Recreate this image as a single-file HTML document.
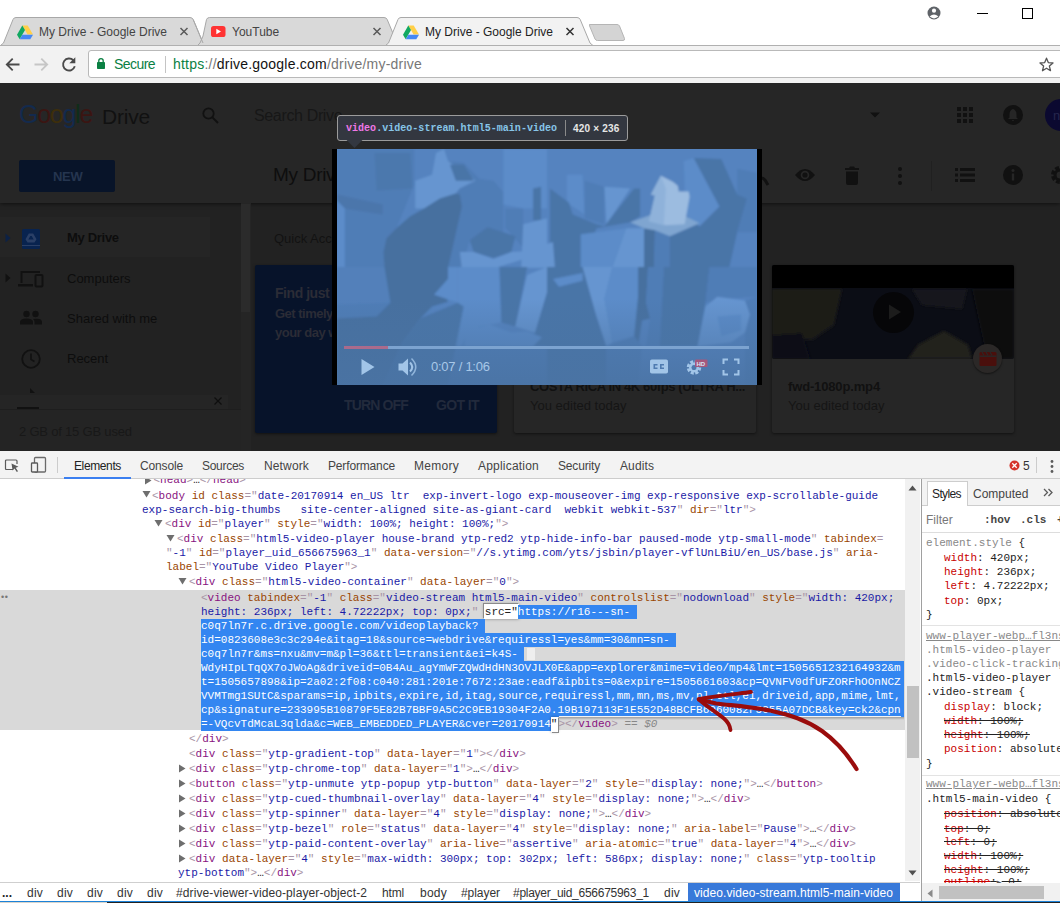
<!DOCTYPE html>
<html><head><meta charset="utf-8"><title>My Drive - Google Drive</title>
<style>
*{box-sizing:border-box;margin:0;padding:0}
html,body{width:1060px;height:903px;overflow:hidden;background:#fff}
body{position:relative;font-family:"Liberation Sans",sans-serif;font-size:12px;color:#222}
.abs,.abs>*{position:absolute}
#titlebar{left:0;top:0;width:1060px;height:46px;background:#fff}
#toolbar{left:0;top:45px;width:1060px;height:38px;background:#f2f2f2;border-top:1px solid #b0b0b0}
#page{left:0;top:83px;width:1060px;height:368px;background:#222;overflow:hidden}
#devtools{left:0;top:451px;width:1060px;height:452px;background:#fff;overflow:hidden}
.t{white-space:nowrap;line-height:1}

.c{font-family:"Liberation Mono",monospace;font-size:11px;line-height:14px;white-space:pre;color:#222}
.c i,.t i{font-style:normal}
.c .t{color:#881280}.c .n{color:#994500}.c .v{color:#1a1aa6}.c .p{color:#a894a6}.c .x{color:#222}
.c .eq{color:#888;font-style:italic}
.c.w{color:#fff}
.selbg{background:#3386f1}
.c .g{color:#888}.c .pn{color:#c80000}
.dtab,.bc{font-size:12px}
/*CSS-END*/
</style></head><body>
<div id="titlebar" class="abs">

<svg style="left:0;top:0" width="1060" height="46" viewBox="0 0 1060 46">
 <!-- inactive tab 1 -->
 <path d="M0.5 45.5 L3.5 43 L13 19.5 Q13.8 17.5 16 17.5 L190 17.5 Q192.3 17.5 193.2 19.5 L203 43 L206 45.5 Z" fill="#d9d9d9" stroke="#a8a8a8" stroke-width="1"/>
 <!-- inactive tab 2 -->
 <path d="M197.5 45.5 L200 43 L203 36 L206.5 19.5 Q207.3 17.5 209.5 17.5 L384 17.5 Q386.3 17.5 387.2 19.5 L397 43 L400 45.5 Z" fill="#d9d9d9" stroke="#a8a8a8" stroke-width="1"/>
 <path d="M193.2 19.5 L203 43" stroke="#a8a8a8" fill="none"/>
 <!-- new tab button -->
 <path d="M589.5 24.5 L617 24.5 Q618.8 24.5 619.5 26 L624.5 38.5 Q625 40.5 623 40.5 L597.5 40.5 Q595.8 40.5 595 39 L589.6 26 Q589 24.5 590.5 24.5Z" fill="#d4d4d4" stroke="#b5b5b5" stroke-width="1"/>
 <!-- bottom line -->
 <path d="M0 45.5 H1060" stroke="#a8a8a8"/>
 <!-- active tab 3 -->
 <path d="M385.5 46 L388.5 43 L398 19.5 Q398.8 17.5 401 17.5 L577 17.5 Q579.3 17.5 580.2 19.5 L590 43 L593 46 Z" fill="#f2f2f2" stroke="none"/>
 <path d="M385.5 45.5 L388.5 43 L398 19.5 Q398.8 17.5 401 17.5 L577 17.5 Q579.3 17.5 580.2 19.5 L590 43 L593 45.5" fill="none" stroke="#a8a8a8"/>
 <!-- favicons: drive -->
 <g id="gd">
  <path d="M22.3 25.5 L27.7 25.5 L33 34.5 L27.6 34.5Z" fill="#ffcf48"/>
  <path d="M22.3 25.5 L17 34.7 L19.7 39.3 L25 30.1Z" fill="#11a861"/>
  <path d="M22.4 34.7 L33 34.7 L30.3 39.3 L19.7 39.3Z" fill="#4688f4"/>
 </g>
 <use href="#gd" x="386" y="0"/>
 <!-- youtube -->
 <rect x="211" y="26" width="14.5" height="11" rx="2.6" fill="#f33"/>
 <path d="M216.3 28.8 L221 31.5 L216.3 34.2Z" fill="#fff"/>
 <!-- close x -->
 <g stroke="#5a5a5a" stroke-width="1.5" fill="none">
  <path d="M180.5 28 l7 7 m0 -7 l-7 7"/>
  <path d="M373.5 28 l7 7 m0 -7 l-7 7"/>
  <path d="M566.5 28 l7 7 m0 -7 l-7 7" stroke="#333"/>
 </g>
 <!-- user icon -->
 <circle cx="934" cy="13" r="6.5" fill="#5f6368"/>
 <circle cx="934" cy="10.7" r="2.1" fill="#fff"/>
 <path d="M929.6 16.6 Q934 12.6 938.4 16.6 Q934 20.2 929.6 16.6Z" fill="#fff"/>
 <!-- min / max -->
 <path d="M977 13.5 H988" stroke="#000" stroke-width="1"/>
 <rect x="1022.5" y="8.5" width="10" height="10" fill="none" stroke="#000" stroke-width="1"/>
</svg>
<div class="t" style="left:39px;top:26px;font-size:12px;color:#444">My Drive - Google Drive</div>
<div class="t" style="left:232px;top:26px;font-size:12px;color:#444">YouTube</div>
<div class="t" style="left:425px;top:26px;font-size:12px;color:#222">My Drive - Google Drive</div>

</div>
<div id="toolbar" class="abs">

<svg style="left:0;top:0" width="1060" height="37" viewBox="0 0 1060 37">
 <rect x="88.5" y="4.5" width="976" height="27" rx="2.5" fill="#fff" stroke="#b9b9b9"/>
 <!-- back -->
 <path d="M19.5 18.5 H7 M12.7 12.6 L6.8 18.5 L12.7 24.4" fill="none" stroke="#4a4a4a" stroke-width="1.8"/>
 <!-- forward -->
 <path d="M34.5 18.5 H47 M41.3 12.6 L47.2 18.5 L41.3 24.4" fill="none" stroke="#c6c6c6" stroke-width="1.8"/>
 <!-- reload -->
 <path d="M73.3 14.2 A6 6 0 1 0 74.8 20.3" fill="none" stroke="#4a4a4a" stroke-width="1.9"/>
 <path d="M75.3 11.3 V17.3 H69.3 Z" fill="#4a4a4a"/>
 <!-- lock -->
 <rect x="97" y="16" width="8" height="7" rx="0.8" fill="#0b8043"/>
 <path d="M98.8 16.5 V14.8 A2.2 2.2 0 0 1 103.2 14.8 V16.5" fill="none" stroke="#0b8043" stroke-width="1.3"/>
 <path d="M165.5 10 V27" stroke="#c4c4c4"/>
 <!-- star -->
 <path d="M1046.5 12.2 L1048.3 16.6 L1053 17 L1049.4 20.1 L1050.5 24.7 L1046.500 22.2 L1042.5 24.7 L1043.6 20.1 L1040 17 L1044.7 16.6Z" fill="none" stroke="#555" stroke-width="1.3" stroke-linejoin="round"/>
</svg>
<div class="t" style="letter-spacing:-0.560px;left:114px;top:11px;font-size:14px;color:#0b8043">Secure</div>
<div class="t" id="url" style="letter-spacing:0.219px;left:173px;top:11px;font-size:14px;color:#777"><span style="color:#0b8043">https</span>://<span style="color:#111">drive.google.com</span>/drive/my-drive</div>

</div>
<div id="page" class="abs">

<!-- header -->
<div style="left:0;top:0;width:1060px;height:120px;background:#262626;box-shadow:0 1px 4px rgba(0,0,0,.55)"></div>
<div class="t" style="letter-spacing:-1.273px;left:19px;top:19px;font-size:25px;font-weight:400"><span style="color:#132a4d">G</span><span style="color:#3b1512">o</span><span style="color:#3d2e0b">o</span><span style="color:#132a4d">g</span><span style="color:#0f2d18">l</span><span style="color:#3b1512">e</span></div>
<div class="t" style="letter-spacing:-0.203px;left:102px;top:23px;font-size:21px;color:#111">Drive</div>
<svg style="left:200px;top:22px" width="22" height="22" viewBox="0 0 22 22"><circle cx="8.5" cy="8.5" r="5.2" fill="none" stroke="#111" stroke-width="1.8"/><path d="M12.4 12.4 L18 18" stroke="#111" stroke-width="2"/></svg>
<div class="t" style="left:254px;top:25px;font-size:16px;color:#171717;letter-spacing:-0.35px">Search Drive</div>
<svg style="left:868px;top:28px" width="14" height="8"><path d="M2 1.5 H12 L7 6.5Z" fill="#111"/></svg>
<!-- apps grid -->
<svg style="left:956px;top:23px" width="18" height="18" viewBox="0 0 18 18" fill="#111"><rect x="1" y="1" width="4" height="4"/><rect x="7" y="1" width="4" height="4"/><rect x="13" y="1" width="4" height="4"/><rect x="1" y="7" width="4" height="4"/><rect x="7" y="7" width="4" height="4"/><rect x="13" y="7" width="4" height="4"/><rect x="1" y="13" width="4" height="4"/><rect x="7" y="13" width="4" height="4"/><rect x="13" y="13" width="4" height="4"/></svg>
<svg style="left:1002px;top:21px" width="22" height="22" viewBox="0 0 22 22"><circle cx="11" cy="11" r="10" fill="#111"/><path d="M11 5 Q7.5 6 7.5 10.5 V13.5 L6 15 H16 L14.500 13.5 V10.5 Q14.5 6 11 5Z M9.800 16 H12.2 Q11 17.8 9.800 16Z" fill="#262626"/></svg>
<div style="left:1045px;top:16px;width:32px;height:32px;border-radius:16px;background:#0b0930"></div>
<div class="t" style="left:1053px;top:26px;font-size:13px;color:#26264d">n</div>
<!-- NEW -->
<div style="left:19px;top:77px;width:96px;height:32px;background:#081429;border-radius:2px"></div>
<div class="t" style="left:53px;top:86.500px;font-size:13px;font-weight:bold;color:#25354f;letter-spacing:-0.3px">NEW</div>
<div class="t" style="left:273px;top:82px;font-size:19px;color:#0e0e0e;letter-spacing:-0.3px">My Drive</div>
<!-- toolbar icons -->
<svg style="left:757px;top:80px" width="14" height="24"><path d="M0 17 Q4 13 8 17 L11 22" fill="none" stroke="#111" stroke-width="3"/></svg>
<svg style="left:794px;top:84px" width="22" height="16" viewBox="0 0 22 16"><path d="M1 8 Q11 -4 21 8 Q11 20 1 8Z" fill="#111"/><circle cx="11" cy="8" r="4.3" fill="#262626"/><circle cx="11" cy="8" r="2.6" fill="#111"/></svg>
<svg style="left:843px;top:82px" width="18" height="22" viewBox="0 0 18 22"><path d="M2 3 H6 L7 1.5 H11 L12 3 H16 V5 H2Z M3 6.500 H15 V18 Q15 20 13 20 H5 Q3 20 3 18Z" fill="#111"/></svg>
<svg style="left:896px;top:83px" width="8" height="20"><circle cx="4" cy="3" r="2" fill="#111"/><circle cx="4" cy="10" r="2" fill="#111"/><circle cx="4" cy="17" r="2" fill="#111"/></svg>
<div style="left:931px;top:78px;width:1px;height:30px;background:#202020"></div>
<svg style="left:955px;top:84px" width="20" height="16" viewBox="0 0 20 16" fill="#111"><rect x="0" y="1" width="3" height="3"/><rect x="5" y="1" width="15" height="3"/><rect x="0" y="6.500" width="3" height="3"/><rect x="5" y="6.500" width="15" height="3"/><rect x="0" y="12" width="3" height="3"/><rect x="5" y="12" width="15" height="3"/></svg>
<svg style="left:1002px;top:81px" width="22" height="22" viewBox="0 0 22 22"><circle cx="11" cy="11" r="10" fill="#111"/><rect x="9.800" y="9.500" width="2.400" height="7" fill="#262626"/><circle cx="11" cy="6.500" r="1.500" fill="#262626"/></svg>
<svg style="left:1049px;top:82px" width="20" height="20" viewBox="0 0 20 20"><circle cx="11" cy="10" r="6.500" fill="none" stroke="#111" stroke-width="5" stroke-dasharray="3.400 1.700"/><circle cx="11" cy="10" r="5" fill="none" stroke="#111" stroke-width="3"/></svg>
<!-- sidebar -->
<div style="left:0;top:134px;width:210px;height:40px;background:#252525"></div>
<div style="left:241px;top:120px;width:10px;height:248px;background:#252525"></div>
<div style="left:241px;top:121px;width:9px;height:108px;background:#2b2b2b"></div>
<svg style="left:4px;top:149px" width="8" height="12"><path d="M1.500 1.500 L6.500 6 L1.500 10.500Z" fill="#0c2145"/></svg>
<svg style="left:21px;top:145px" width="20" height="22" viewBox="0 0 20 22"><rect x="1" y="1" width="18" height="20" rx="1.500" fill="#08234f"/><path d="M7.800 5.500 H12.2 L15.500 11.200 L13.500 14.500 H6.500 L4.500 11.200Z M9.300 8 L7.300 11.500 H12.7 L10.700 8Z" fill="#2a3f66" fill-rule="evenodd"/><rect x="1" y="17" width="18" height="1" fill="#2a3f66"/></svg>
<div class="t" style="left:67px;top:231px;margin-top:-83px;font-size:13px;font-weight:bold;color:#0d0d0d;letter-spacing:-0.3px">My Drive</div>
<svg style="left:4px;top:189px" width="8" height="12"><path d="M1.500 1.500 L6.500 6 L1.500 10.500Z" fill="#111"/></svg>
<svg style="left:18px;top:187px" width="27" height="18" viewBox="0 0 27 18"><path d="M3.500 13 V2 H22" fill="none" stroke="#111" stroke-width="2"/><rect x="0" y="14" width="15" height="2.500" fill="#111"/><rect x="17.500" y="5" width="7" height="11.500" rx="1" fill="none" stroke="#111" stroke-width="2"/></svg>
<div class="t" style="left:67px;top:188.500px;font-size:13px;color:#0d0d0d">Computers</div>
<svg style="left:19px;top:227px" width="24" height="16" viewBox="0 0 24 16" fill="#111"><circle cx="7.500" cy="4" r="3.200"/><circle cx="16.500" cy="4" r="3.200"/><path d="M1 14.500 V12 Q1 8.500 7.500 8.500 Q14 8.500 14 12 V14.500Z"/><path d="M15.500 14.500 V12 Q15.500 10 14 9 Q23 7.500 23 12 V14.500Z"/></svg>
<div class="t" style="left:67px;top:228.500px;font-size:13px;color:#0d0d0d">Shared with me</div>
<svg style="left:20px;top:265px" width="22" height="22" viewBox="0 0 22 22"><circle cx="11" cy="11" r="8.800" fill="none" stroke="#111" stroke-width="1.800"/><path d="M11 5.500 V11.500 L14.500 13.500" fill="none" stroke="#111" stroke-width="1.600"/></svg>
<div class="t" style="left:67px;top:268.500px;font-size:13px;color:#0d0d0d">Recent</div>
<svg style="left:29px;top:304px" width="8" height="8"><path d="M1 1 L6 6 H1Z" fill="#111"/></svg>
<!-- bottom promo bar -->
<div style="left:0;top:312px;width:228px;height:14px;background:#252525"></div>
<div style="left:17px;top:324px;width:22px;height:2px;background:#111"></div>
<svg style="left:213px;top:313px" width="10" height="10"><path d="M1.500 1.500 L8.500 8.500 M8.500 1.500 L1.500 8.500" stroke="#0e0e0e" stroke-width="1.200"/></svg>
<div style="left:0;top:326px;width:241px;height:42px;background:#242424;border-top:1px solid #1e1e1e"></div>
<div class="t" style="left:19px;top:342px;font-size:13px;color:#181818;letter-spacing:-0.200px">2 GB of 15 GB used</div>
<!-- main -->
<div class="t" style="left:274px;top:148.500px;font-size:13px;color:#121212">Quick Access</div>
<div style="left:255px;top:182px;width:242px;height:168px;background:#07132a;border-radius:2px;box-shadow:0 1px 3px rgba(0,0,0,.5)"></div>
<div class="t" style="left:275px;top:203px;font-size:14px;font-weight:bold;color:#2b2c36;letter-spacing:-0.45px">Find just what you need</div>
<div class="t" style="left:275px;top:224px;font-size:13px;font-weight:bold;color:#2b2c36;letter-spacing:-0.5px">Get timely suggestions</div>
<div class="t" style="left:275px;top:243px;font-size:13px;font-weight:bold;color:#2b2c36;letter-spacing:-0.5px">your day with Quick</div>
<div class="t" style="letter-spacing:-0.846px;left:344px;top:315px;font-size:14px;font-weight:bold;color:#222a3c">TURN OFF</div>
<div class="t" style="letter-spacing:-0.612px;left:436px;top:315px;font-size:14px;font-weight:bold;color:#222a3c">GOT IT</div>
<!-- card 2 -->
<div style="left:514px;top:182px;width:242px;height:168px;background:#262626;border-radius:2px;box-shadow:0 1px 3px rgba(0,0,0,.5)"></div>
<div class="t" style="letter-spacing:-0.375px;left:530px;top:297px;font-size:13px;font-weight:bold;color:#111">COSTA RICA IN 4K 60fps (ULTRA H...</div>
<div class="t" style="left:530px;top:316px;font-size:13px;color:#151515">You edited today</div>
<!-- card 3 -->
<div style="left:772px;top:182px;width:242px;height:168px;background:#262626;border-radius:2px;box-shadow:0 1px 3px rgba(0,0,0,.5)"></div>
<svg style="left:772px;top:182px" width="242" height="94" viewBox="0 0 242 94">
 <defs><filter id="tb"><feGaussianBlur stdDeviation="1.5"/></filter><clipPath id="tc"><rect width="242" height="94" rx="2"/></clipPath></defs>
 <g clip-path="url(#tc)"><rect width="242" height="94" fill="#0b0d15"/>
 <g filter="url(#tb)">
  <path d="M0 24 H70 L62 60 L40 75 L0 70Z" fill="#1b1a18"/>
  <path d="M0 70 L30 68 L38 94 H0Z" fill="#0d0f16"/>
  <path d="M140 24 H195 L190 44 L150 40Z" fill="#16171b"/>
  <path d="M136 94 L146 80 L172 66 L196 80 L200 94Z" fill="#24211a"/>
  <path d="M200 24 H242 V94 H215Z" fill="#0a0b10"/>
 </g>
 <rect width="242" height="23" fill="#000"/></g>
</svg>
<div style="left:873px;top:209px;width:41px;height:41px;border-radius:21px;background:#060608"></div>
<svg style="left:887px;top:220px" width="16" height="18"><path d="M2 1.500 L14 9 L2 16.500Z" fill="#1c1c1c"/></svg>
<div style="left:973px;top:260.500px;width:29px;height:29px;border-radius:15px;background:#2b2827;box-shadow:0 1px 2px rgba(0,0,0,.5)"></div>
<svg style="left:979px;top:267.500px" width="18" height="16" viewBox="0 0 18 16"><rect x="0.500" y="1" width="17" height="14" rx="1.500" fill="#4a0f0c"/><rect x="0.500" y="4.500" width="17" height="1.400" fill="#2b2827"/><path d="M3 1 l2 3.500 M7 1 l2 3.500 M11 1 l2 3.500" stroke="#2b2827" stroke-width="1.200"/></svg>
<div class="t" style="letter-spacing:-0.148px;left:788px;top:297px;font-size:13px;font-weight:bold;color:#111">fwd-1080p.mp4</div>
<div class="t" style="left:788px;top:316px;font-size:13px;color:#151515">You edited today</div>

<!-- video container -->
<div style="left:332px;top:66px;width:429.500px;height:236px;background:#000"></div>
<svg style="left:337px;top:66px" width="420" height="236" viewBox="0 0 420 236">
 <defs><filter id="vb" x="-5%" y="-5%" width="110%" height="110%"><feGaussianBlur stdDeviation="1.3"/></filter></defs>
 <rect width="420" height="236" fill="#5583bf"/>
 <g filter="url(#vb)">
 <rect x="-20" y="-20" width="460" height="276" fill="#5583bf"/>
 <g transform="scale(0.19811)">
  <polygon points="0,0 390,0 390,180 300,400 250,450 235,520 240,600 0,600" fill="#507db6"/>
  <polygon points="190,20 370,20 380,200 200,210" fill="#4a74a7" opacity="0.6"/>
  <polygon points="0,230 230,280 230,330 40,300 40,600 0,600" fill="#4a74a7" opacity="0.7"/>
  <polygon points="0,260 40,300 40,600 0,600" fill="#5c8cc9"/>
  <polygon points="395,160 480,130 500,20 540,0 560,60 620,70 700,160 620,200 600,225 520,250 440,300 395,300" fill="#6695d0"/>
  <polygon points="560,60 640,70 720,150 790,160 840,220 840,420 760,400 670,460 630,600 560,600 590,470 610,380 630,290 620,230 600,225 620,200 700,160" fill="#507db6"/>
  <polygon points="570,80 640,80 690,160 600,160" fill="#4a74a7"/>
  <polygon points="840,0 1060,0 1060,300 940,300 840,280" fill="#5c8cc9"/>
  <polygon points="850,300 940,300 940,500 880,430 850,400" fill="#507db6"/>
  <polygon points="990,200 1030,190 1030,360 990,360" fill="#4a74a7"/>
  <polygon points="940,380 1060,350 1060,600 930,600" fill="#6695d0"/>
  <polygon points="600,225 620,230 630,290 610,380 590,470 560,600 240,600 235,520 250,450 300,400 370,340 440,300 520,250" fill="#466f9f"/>
  <polygon points="670,460 760,395 900,440 880,520 790,550 690,520" fill="#4a74a7"/>
  <polygon points="620,520 690,520 790,555 880,520 980,515 975,545 800,600 630,600" fill="#6695d0"/>
 </g>
 <g transform="translate(210,0) scale(0.19811)">
  <polygon points="0,0 520,0 520,130 0,130" fill="#5583bf"/>
  <polygon points="100,130 180,130 190,330 100,270" fill="#5c8cc9"/>
  <polygon points="190,160 290,190 290,380 190,350" fill="#507db6"/>
  <polygon points="290,190 420,200 300,380" fill="#6695d0"/>
  <polygon points="15,200 110,270 130,330 250,380 290,390 440,200 470,200 470,340 420,370 250,400 170,600 15,600" fill="#4a74a7"/>
  <polygon points="0,480 30,470 40,600 0,600" fill="#6695d0"/>
  <polygon points="170,430 400,400 330,600 170,600" fill="#5c8cc9"/>
  <polygon points="400,400 490,400 490,600 330,600" fill="#6695d0"/>
  <polygon points="490,400 545,410 540,600 490,600" fill="#466f9f"/>
  <polygon points="545,410 620,440 620,600 540,600" fill="#507db6"/>
  <polygon points="620,440 770,375 720,600 620,600" fill="#4a74a7"/>
  <polygon points="740,45 880,50 960,230 1010,250 960,420 920,600 720,600 760,400 870,290" fill="#4a74a7"/>
  <polygon points="690,60 740,45 870,290 770,390 700,330" fill="#5c8cc9"/>
  <polygon points="960,100 1060,120 1060,420 960,420 1010,250 960,230" fill="#507db6"/>
  <polygon points="420,370 520,335 700,340 770,375 620,440 545,410 490,400" fill="#7fa5d0"/>
  <polygon points="575,135 635,165 660,185 665,215 715,215 720,240 695,380 600,385 515,365 545,235 525,230" fill="#9cbce0"/>
  <polygon points="575,135 600,200 590,385 515,365 545,235 525,230" fill="#8fb2da"/>
 </g>
 <g transform="translate(0,118) scale(0.19811)">
  <polygon points="0,0 240,0 270,180 0,190" fill="#5280ba"/>
  <polygon points="0,190 270,180 200,250 0,260" fill="#507db6"/>
  <polygon points="240,0 590,0 560,60 490,140 550,145 560,175 480,200 420,260 330,380 230,600 0,600 0,260 200,250 270,180" fill="#466f9f"/>
  <polygon points="420,260 610,180 640,200 600,400 560,600 230,600 330,380" fill="#4a74a7"/>
  <polygon points="610,0 820,0 830,280 720,300 660,330 620,420 600,400 640,200 610,180" fill="#5c8cc9"/>
  <polygon points="560,0 610,0 610,180 490,140 560,60" fill="#5c8cc9"/>
  <polygon points="820,0 960,0 900,300 830,280" fill="#4a74a7"/>
  <polygon points="960,40 1060,0 1060,130 1000,330 900,300" fill="#6695d0"/>
  <polygon points="1000,330 1060,130 1060,400 960,400" fill="#4a74a7"/>
  <polygon points="650,320 770,290 880,330 960,325 1035,355 960,430 840,400 740,400 640,430" fill="#5c8cc9"/>
  <polygon points="600,400 1060,400 1060,600 560,600" fill="#507db6"/>
 </g>
 <g transform="translate(210,118) scale(0.19811)">
  <polygon points="0,0 180,0 250,250 300,400 300,600 0,600" fill="#4a74a7"/>
  <polygon points="30,60 180,30 180,70 60,100" fill="#5c8cc9"/>
  <polygon points="180,0 330,0 290,160 330,380 300,400 250,250" fill="#6695d0"/>
  <polygon points="330,0 460,0 460,150 440,350 330,380 290,160" fill="#5c8cc9"/>
  <polygon points="460,0 510,0 500,180 520,260 480,270 460,400 440,350 460,150" fill="#466f9f"/>
  <polygon points="510,0 590,0 570,400 500,400 520,260 500,180" fill="#507db6"/>
  <polygon points="590,0 820,0 800,180 760,400 570,400" fill="#4a74a7"/>
  <polygon points="820,0 1060,0 1060,150 900,160 800,180" fill="#507db6"/>
  <polygon points="800,200 860,150 1000,170 1025,240 1000,330 930,380 760,400" fill="#6695d0"/>
  <polygon points="860,250 980,240 980,320 880,350" fill="#5c8cc9"/>
  <polygon points="1000,170 1060,150 1060,600 1000,600 1000,330 1025,240" fill="#507db6"/>
  <polygon points="300,400 440,350 480,400 460,600 300,600" fill="#507db6"/>
 </g>
 </g>
 <!-- controls -->
 <defs><linearGradient id="vg" x1="0" y1="0" x2="0" y2="1"><stop offset="0" stop-color="#4a73a3" stop-opacity="0"/><stop offset="1" stop-color="#4a73a3" stop-opacity="0.85"/></linearGradient></defs>
 <rect x="0" y="150" width="420" height="86" fill="url(#vg)"/>
 <rect x="7" y="197" width="405" height="3" fill="#7ca3d0"/>
 <rect x="7" y="197" width="44" height="3" fill="#aa6b8c"/>
 <path d="M24.500 210 L37.500 218 L24.500 226Z" fill="#a2c5e8"/>
 <path d="M61.500 214.500 H65.500 L71 209.500 V226.500 L65.500 221.500 H61.500Z" fill="#a2c5e8"/>
 <path d="M73 213.500 Q77.500 218 73 222.500" fill="none" stroke="#a2c5e8" stroke-width="2"/>
 <path d="M74.500 209.500 Q83 218 74.500 226.500" fill="none" stroke="#a2c5e8" stroke-width="1.500" opacity="0.8"/>
 <rect x="313" y="210.500" width="18" height="14" rx="1.800" fill="#a2c5e8"/>
 <path d="M320.500 215.800 H317.300 V219.200 H320.500 M327 215.800 H323.800 V219.200 H327" fill="none" stroke="#4f7bb0" stroke-width="1.600"/>
 <circle cx="357" cy="218.500" r="5" fill="none" stroke="#a2c5e8" stroke-width="4.500" stroke-dasharray="2.600 1.330"/>
 <circle cx="357" cy="218.500" r="3.800" fill="none" stroke="#a2c5e8" stroke-width="2.400"/>
 <rect x="358" y="210.500" width="12.500" height="7.500" rx="1" fill="#a5587c"/>
 <path d="M386.500 215 V210.500 H391 M397 210.500 H401.500 V215 M401.500 221 V225.500 H397 M391 225.500 H386.500 V221" fill="none" stroke="#a2c5e8" stroke-width="2"/>
</svg>
<div class="t" style="left:431px;top:277px;font-size:13px;color:#a8c8e8;letter-spacing:-0.250px">0:07 / 1:06</div>
<div class="t" style="left:696.500px;top:278px;font-size:6px;font-weight:bold;color:#d8e4f4">HD</div>
<!-- tooltip -->
<div style="left:337px;top:32px;width:291px;height:26px;background:#333740;border:1px solid #9b9b9b;border-radius:3px"></div>
<svg style="left:346px;top:57px" width="18" height="9"><path d="M0.500 0 L8.500 8 L16.500 0Z" fill="#333740"/></svg>
<div class="t" style="left:346px;top:40.500px;font-family:'Liberation Mono',monospace;font-size:10px;font-weight:bold;letter-spacing:0.030px"><span style="color:#ee78e6">video</span><span style="color:#87c5e8">.video-stream.html5-main-video</span></div>
<div style="left:565px;top:37px;width:1px;height:16px;background:#8a8a8a"></div>
<div class="t" style="left:573px;top:40.500px;font-size:10px;font-weight:bold;color:#e6e6e6;letter-spacing:0.200px">420 × 236</div>


</div>
<div id="devtools" class="abs">
<!--DT1-->
<div class="abs" style="left:0;top:0;width:1060px;height:28px;z-index:5">
<div style="left:0;top:0;width:1060px;height:1px;background:#f3f3f3"></div>
<div style="left:0;top:1px;width:1060px;height:27px;background:#f3f3f3;border-bottom:1px solid #cdcdcd"></div>
<svg style="left:4px;top:7px" width="16" height="16" viewBox="0 0 16 16"><path d="M9 11.500 H2.500 Q1.500 11.500 1.500 10.500 V3 Q1.500 2 2.500 2 H12 Q13 2 13 3 V6" fill="none" stroke="#5a5a5a" stroke-width="1.200"/><path d="M7.500 5.500 L14.500 8.800 L11.700 9.800 L14 13.200 L12.800 14 L10.500 10.600 L8.600 12.600Z" fill="#5a5a5a"/></svg>
<svg style="left:30px;top:5px" width="18" height="18" viewBox="0 0 18 18"><rect x="4.500" y="1.500" width="11" height="14.500" rx="1" fill="none" stroke="#6a6a6a" stroke-width="1.300"/><rect x="1.500" y="7" width="6" height="9" rx="0.800" fill="#f3f3f3" stroke="#5a5a5a" stroke-width="1.300"/></svg>
<div style="left:57px;top:6px;width:1px;height:16px;background:#ccc"></div>
<div style="left:64px;top:25.500px;width:67px;height:2px;background:#3b7ff0"></div>
<div class="t dtab" style="letter-spacing:-0.379px;left:74px;top:9px;color:#222">Elements</div>
<div class="t dtab" style="letter-spacing:-0.147px;left:140px;top:9px;color:#444">Console</div>
<div class="t dtab" style="letter-spacing:-0.290px;left:202px;top:9px;color:#444">Sources</div>
<div class="t dtab" style="letter-spacing:0.141px;left:264px;top:9px;color:#444">Network</div>
<div class="t dtab" style="letter-spacing:-0.155px;left:328px;top:9px;color:#444">Performance</div>
<div class="t dtab" style="letter-spacing:0.276px;left:414px;top:9px;color:#444">Memory</div>
<div class="t dtab" style="letter-spacing:0.207px;left:478px;top:9px;color:#444">Application</div>
<div class="t dtab" style="letter-spacing:-0.170px;left:558px;top:9px;color:#444">Security</div>
<div class="t dtab" style="letter-spacing:0.107px;left:620px;top:9px;color:#444">Audits</div>
<svg style="left:1009px;top:9px" width="11" height="11"><circle cx="5.500" cy="5.500" r="5" fill="#d5332a"/><path d="M3.300 3.300 L7.700 7.700 M7.700 3.300 L3.300 7.700" stroke="#fff" stroke-width="1.300"/></svg>
<div class="t" style="left:1023px;top:9px;font-size:12px;color:#333">5</div>
<div style="left:1036px;top:6px;width:1px;height:16px;background:#ccc"></div>
<svg style="left:1049px;top:8px" width="6" height="16"><circle cx="3" cy="2.500" r="1.400" fill="#5a5a5a"/><circle cx="3" cy="7.500" r="1.400" fill="#5a5a5a"/><circle cx="3" cy="12.500" r="1.400" fill="#5a5a5a"/></svg>
</div>
<div style="left:0;top:139px;width:905px;height:140px;background:#d9d9d9"></div>
<div class="t" style="left:1px;top:142px;font-size:9px;color:#777;letter-spacing:0.5px">••</div>
<div class="c" style="left:153.5px;top:22.2px"><i class="p">&lt;</i><i class="t">head</i><i class="p">&gt;</i><i class="x">…</i><i class="p">&lt;/</i><i class="t">head</i><i class="p">&gt;</i></div>
<svg style="left:143.5px;top:24.5px" width="8" height="9"><path d="M1 0.500 V8.500 L7.500 4.500Z" fill="#6e6e6e"/></svg>
<div class="c" style="left:152px;top:37.7px"><i class="p">&lt;</i><i class="t">body</i> <i class="n">id</i> <i class="n">class</i><i class="p">="</i><i class="v">date-20170914 en_US ltr  exp-invert-logo exp-mouseover-img exp-responsive exp-scrollable-guide</i></div>
<svg style="left:141.5px;top:39px" width="9" height="8"><path d="M0.500 1 H8.500 L4.500 7.500Z" fill="#6e6e6e"/></svg>
<div class="c" style="left:142px;top:51.7px"><i class="v">exp-search-big-thumbs   site-center-aligned site-as-giant-card  webkit webkit-537</i><i class="p">"</i> <i class="n">dir</i><i class="p">="</i><i class="v">ltr</i><i class="p">"&gt;</i></div>
<div class="c" style="left:165px;top:66.2px"><i class="p">&lt;</i><i class="t">div</i> <i class="n">id</i><i class="p">="</i><i class="v">player</i><i class="p">"</i> <i class="n">style</i><i class="p">="</i><i class="v">width: 100%; height: 100%;</i><i class="p">"&gt;</i></div>
<svg style="left:153.5px;top:67.5px" width="9" height="8"><path d="M0.500 1 H8.500 L4.500 7.500Z" fill="#6e6e6e"/></svg>
<div class="c" style="left:177px;top:81.2px"><i class="p">&lt;</i><i class="t">div</i> <i class="n">class</i><i class="p">="</i><i class="v">html5-video-player house-brand ytp-red2 ytp-hide-info-bar paused-mode ytp-small-mode</i><i class="p">"</i> <i class="n">tabindex</i><i class="p">=</i></div>
<svg style="left:165.5px;top:82.5px" width="9" height="8"><path d="M0.500 1 H8.500 L4.500 7.500Z" fill="#6e6e6e"/></svg>
<div class="c" style="left:166px;top:95.2px"><i class="p">"</i><i class="v">-1</i><i class="p">"</i> <i class="n">id</i><i class="p">="</i><i class="v">player_uid_656675963_1</i><i class="p">"</i> <i class="n">data-version</i><i class="p">="</i><i class="v">//s.ytimg.com/yts/jsbin/player-vflUnLBiU/en_US/base.js</i><i class="p">"</i> <i class="n">aria-</i></div>
<div class="c" style="left:166px;top:109.2px"><i class="n">label</i><i class="p">="</i><i class="v">YouTube Video Player</i><i class="p">"&gt;</i></div>
<div class="c" style="left:189px;top:124.2px"><i class="p">&lt;</i><i class="t">div</i> <i class="n">class</i><i class="p">="</i><i class="v">html5-video-container</i><i class="p">"</i> <i class="n">data-layer</i><i class="p">="</i><i class="v">0</i><i class="p">"&gt;</i></div>
<svg style="left:177.5px;top:125.5px" width="9" height="8"><path d="M0.500 1 H8.500 L4.500 7.500Z" fill="#6e6e6e"/></svg>
<div class="c" style="left:201px;top:139.5px"><i class="p">&lt;</i><i class="t">video</i> <i class="n">tabindex</i><i class="p">="</i><i class="v">-1</i><i class="p">"</i> <i class="n">class</i><i class="p">="</i><i class="v">video-stream html5-main-video</i><i class="p">"</i> <i class="n">controlslist</i><i class="p">="</i><i class="v">nodownload</i><i class="p">"</i> <i class="n">style</i><i class="p">="</i><i class="v">width: 420px;</i></div>
<div class="c" style="left:201px;top:153.5px"><i class="v">height: 236px; left: 4.72222px; top: 0px;</i><i class="p">"</i> </div>
<div class="c" style="left:189px;top:280.75px"><i class="p">&lt;/</i><i class="t">div</i><i class="p">&gt;</i></div>
<div class="c" style="left:189px;top:295.75px"><i class="p">&lt;</i><i class="t">div</i> <i class="n">class</i><i class="p">="</i><i class="v">ytp-gradient-top</i><i class="p">"</i> <i class="n">data-layer</i><i class="p">="</i><i class="v">1</i><i class="p">"&gt;&lt;/</i><i class="t">div</i><i class="p">&gt;</i></div>
<div class="c" style="left:189px;top:310.75px"><i class="p">&lt;</i><i class="t">div</i> <i class="n">class</i><i class="p">="</i><i class="v">ytp-chrome-top</i><i class="p">"</i> <i class="n">data-layer</i><i class="p">="</i><i class="v">1</i><i class="p">"&gt;</i><i class="x">…</i><i class="p">&lt;/</i><i class="t">div</i><i class="p">&gt;</i></div>
<svg style="left:177.5px;top:312.5px" width="8" height="9"><path d="M1 0.500 V8.500 L7.500 4.500Z" fill="#6e6e6e"/></svg>
<div class="c" style="left:189px;top:325.75px"><i class="p">&lt;</i><i class="t">button</i> <i class="n">class</i><i class="p">="</i><i class="v">ytp-unmute ytp-popup ytp-button</i><i class="p">"</i> <i class="n">data-layer</i><i class="p">="</i><i class="v">2</i><i class="p">"</i> <i class="n">style</i><i class="p">="</i><i class="v">display: none;</i><i class="p">"&gt;</i><i class="x">…</i><i class="p">&lt;/</i><i class="t">button</i><i class="p">&gt;</i></div>
<svg style="left:177.5px;top:327.5px" width="8" height="9"><path d="M1 0.500 V8.500 L7.500 4.500Z" fill="#6e6e6e"/></svg>
<div class="c" style="left:189px;top:340.75px"><i class="p">&lt;</i><i class="t">div</i> <i class="n">class</i><i class="p">="</i><i class="v">ytp-cued-thumbnail-overlay</i><i class="p">"</i> <i class="n">data-layer</i><i class="p">="</i><i class="v">4</i><i class="p">"</i> <i class="n">style</i><i class="p">="</i><i class="v">display: none;</i><i class="p">"&gt;</i><i class="x">…</i><i class="p">&lt;/</i><i class="t">div</i><i class="p">&gt;</i></div>
<svg style="left:177.5px;top:342.5px" width="8" height="9"><path d="M1 0.500 V8.500 L7.500 4.500Z" fill="#6e6e6e"/></svg>
<div class="c" style="left:189px;top:355.75px"><i class="p">&lt;</i><i class="t">div</i> <i class="n">class</i><i class="p">="</i><i class="v">ytp-spinner</i><i class="p">"</i> <i class="n">data-layer</i><i class="p">="</i><i class="v">4</i><i class="p">"</i> <i class="n">style</i><i class="p">="</i><i class="v">display: none;</i><i class="p">"&gt;</i><i class="x">…</i><i class="p">&lt;/</i><i class="t">div</i><i class="p">&gt;</i></div>
<svg style="left:177.5px;top:357.5px" width="8" height="9"><path d="M1 0.500 V8.500 L7.500 4.500Z" fill="#6e6e6e"/></svg>
<div class="c" style="left:189px;top:370.75px"><i class="p">&lt;</i><i class="t">div</i> <i class="n">class</i><i class="p">="</i><i class="v">ytp-bezel</i><i class="p">"</i> <i class="n">role</i><i class="p">="</i><i class="v">status</i><i class="p">"</i> <i class="n">data-layer</i><i class="p">="</i><i class="v">4</i><i class="p">"</i> <i class="n">style</i><i class="p">="</i><i class="v">display: none;</i><i class="p">"</i> <i class="n">aria-label</i><i class="p">="</i><i class="v">Pause</i><i class="p">"&gt;</i><i class="x">…</i><i class="p">&lt;/</i><i class="t">div</i><i class="p">&gt;</i></div>
<svg style="left:177.5px;top:372.5px" width="8" height="9"><path d="M1 0.500 V8.500 L7.500 4.500Z" fill="#6e6e6e"/></svg>
<div class="c" style="left:189px;top:385.75px"><i class="p">&lt;</i><i class="t">div</i> <i class="n">class</i><i class="p">="</i><i class="v">ytp-paid-content-overlay</i><i class="p">"</i> <i class="n">aria-live</i><i class="p">="</i><i class="v">assertive</i><i class="p">"</i> <i class="n">aria-atomic</i><i class="p">="</i><i class="v">true</i><i class="p">"</i> <i class="n">data-layer</i><i class="p">="</i><i class="v">4</i><i class="p">"&gt;</i><i class="x">…</i><i class="p">&lt;/</i><i class="t">div</i><i class="p">&gt;</i></div>
<svg style="left:177.5px;top:387.5px" width="8" height="9"><path d="M1 0.500 V8.500 L7.500 4.500Z" fill="#6e6e6e"/></svg>
<div class="c" style="left:189px;top:400.75px"><i class="p">&lt;</i><i class="t">div</i> <i class="n">data-layer</i><i class="p">="</i><i class="v">4</i><i class="p">"</i> <i class="n">style</i><i class="p">="</i><i class="v">max-width: 300px; top: 302px; left: 586px; display: none;</i><i class="p">"</i> <i class="n">class</i><i class="p">="</i><i class="v">ytp-tooltip</i></div>
<svg style="left:177.5px;top:402.5px" width="8" height="9"><path d="M1 0.500 V8.500 L7.500 4.500Z" fill="#6e6e6e"/></svg>
<div class="c" style="left:178px;top:414.75px"><i class="v">ytp-bottom</i><i class="p">"&gt;</i><i class="x">…</i><i class="p">&lt;/</i><i class="t">div</i><i class="p">&gt;</i></div>
<div style="left:483.8px;top:153px;width:35px;height:15px;background:#fff;box-shadow:-1px -1px 0 #8a8a8a, 0 0 3px rgba(0,0,0,.4)"></div>
<div class="c" style="left:484.8px;top:153.5px"><i class="x">src="</i></div>
<div class="selbg" style="left:517.8px;top:153.5px;width:118.8px;height:14px"></div>
<div class="c w" style="left:517.8px;top:153.5px">https://r16---sn-</div>
<div class="selbg" style="left:201px;top:167.5px;width:283.8px;height:14px"></div>
<div class="c w" style="left:201px;top:167.5px">c0q7ln7r.c.drive.google.com/videoplayback?</div>
<div class="selbg" style="left:201px;top:181.5px;width:475.2px;height:14px"></div>
<div class="c w" style="left:201px;top:181.5px">id=0823608e3c3c294e&amp;itag=18&amp;source=webdrive&amp;requiressl=yes&amp;mm=30&amp;mn=sn-</div>
<div class="selbg" style="left:201px;top:195.5px;width:323.4px;height:14px"></div>
<div class="c w" style="left:201px;top:195.5px">c0q7ln7r&amp;ms=nxu&amp;mv=m&amp;pl=36&amp;ttl=transient&amp;ei=k4S-</div>
<div class="selbg" style="left:201px;top:209.5px;width:703px;height:14px"></div>
<div class="c w" style="left:201px;top:209.5px">WdyHIpLTqQX7oJWoAg&amp;driveid=0B4Au_agYmWFZQWdHdHN3OVJLX0E&amp;app=explorer&amp;mime=video/mp4&amp;lmt=1505651232164932&amp;m</div>
<div class="selbg" style="left:201px;top:223.5px;width:703px;height:14px"></div>
<div class="c w" style="left:201px;top:223.5px">t=1505657898&amp;ip=2a02:2f08:c040:281:201e:7672:23ae:eadf&amp;ipbits=0&amp;expire=1505661603&amp;cp=QVNFV0dfUFZORFhOOnNCZ</div>
<div class="selbg" style="left:201px;top:237.5px;width:703px;height:14px"></div>
<div class="c w" style="left:201px;top:237.5px">VVMTmg1SUtC&amp;sparams=ip,ipbits,expire,id,itag,source,requiressl,mm,mn,ms,mv,pl,ttl,ei,driveid,app,mime,lmt,</div>
<div class="selbg" style="left:201px;top:251.5px;width:703px;height:14px"></div>
<div class="c w" style="left:201px;top:251.5px">cp&amp;signature=233995B10879F5E82B7BBF9A5C2C9EB19304F2A0.19B197113F1E552D48BCFB6060082F5C55A07DCB&amp;key=ck2&amp;cpn</div>
<div class="selbg" style="left:201px;top:265.5px;width:349.8px;height:14px"></div>
<div class="c w" style="left:201px;top:265.5px">=-VQcvTdMcaL3qlda&amp;c=WEB_EMBEDDED_PLAYER&amp;cver=20170914</div>
<div style="left:550.8px;top:265.5px;width:7.6px;height:15px;background:#fff;box-shadow:1px 1px 0 #8a8a8a, 0 0 3px rgba(0,0,0,.4)"></div>
<div class="c" style="left:550.8px;top:265.5px"><i class="x">"</i></div>
<div class="c" style="left:558.4px;top:265.5px"><i class="p">&gt;&lt;/</i><i class="t">video</i><i class="p">&gt;</i> <i class="eq">== $0</i></div>
<div style="left:559.4px;top:265px;width:341.6px;height:1px;background:#f4f4f4"></div>
<div style="left:559.4px;top:266px;width:344.6px;height:3px;background:linear-gradient(#9d9d9d,#d9d9d9)"></div>
<div style="left:527px;top:196.5px;width:8px;height:12px;background:#eee"></div>
<div style="left:905px;top:28px;width:15px;height:402px;background:#f1f1f1"></div>
<svg style="left:908px;top:34px" width="9" height="6"><path d="M0.500 5.500 L4.500 0.500 L8.500 5.500Z" fill="#505050"/></svg>
<svg style="left:908px;top:419px" width="9" height="6"><path d="M0.500 0.500 L4.500 5.500 L8.500 0.500Z" fill="#505050"/></svg>
<div style="left:907px;top:235px;width:12px;height:72px;background:#c1c1c1"></div>
<div style="left:920.500px;top:28px;width:1.500px;height:422px;background:#a0a0a0"></div>
<!--DT2-->
<div style="left:922px;top:28px;width:138px;height:27px;background:#f3f3f3;border-bottom:1px solid #cdcdcd"></div>
<div style="left:927px;top:30px;width:41px;height:25px;background:#fff;border:1px solid #cdcdcd;border-bottom:none"></div>
<div class="t" style="letter-spacing:-0.615px;left:932px;top:37px;font-size:12px;color:#222">Styles</div>
<div class="t" style="left:973px;top:37px;font-size:12px;color:#444">Computed</div>
<svg style="left:1043px;top:37px" width="10" height="9"><path d="M1 1 L4.500 4.500 L1 8 M5.500 1 L9 4.500 L5.500 8" fill="none" stroke="#5a5a5a" stroke-width="1.300"/></svg>
<div style="left:922px;top:81px;width:138px;height:1px;background:#ddd"></div>
<div class="t" style="left:926px;top:63px;font-size:12px;color:#777">Filter</div>
<div class="c" style="left:984px;top:62px;color:#444;font-weight:bold">:hov</div>
<div class="c" style="left:1020px;top:62px;color:#444;font-weight:bold">.cls</div>
<div class="c" style="left:1057px;top:62px;color:#444;font-weight:bold">+</div>
<div class="c" style="left:926px;top:85px"><i class="g">element.style</i><i class="x"> {</i></div>
<div class="c" style="left:944px;top:100px"><i class="pn">width</i><i class="x">: 420px;</i></div>
<div class="c" style="left:944px;top:114px"><i class="pn">height</i><i class="x">: 236px;</i></div>
<div class="c" style="left:944px;top:128px"><i class="pn">left</i><i class="x">: 4.72222px;</i></div>
<div class="c" style="left:944px;top:142.5px"><i class="pn">top</i><i class="x">: 0px;</i></div>
<div class="c" style="left:926px;top:157px"><i class="x">}</i></div>
<div style="left:922px;top:174px;width:138px;height:1px;background:#e3e3e3"></div>
<div class="c" style="left:926px;top:178px"><i class="g" style="text-decoration:underline">www-player-webp…fl3ns</i></div>
<div class="c" style="left:926px;top:191.5px"><i class="g">.html5-video-player</i></div>
<div class="c" style="left:926px;top:205.5px"><i class="g">.video-click-tracking,</i></div>
<div class="c" style="left:926px;top:219.5px"><i class="x">.html5-video-player</i></div>
<div class="c" style="left:926px;top:233.5px"><i class="x">.video-stream {</i></div>
<div class="c" style="left:944px;top:249px"><i class="pn">display</i><i class="x">: block;</i></div>
<div class="c" style="left:944px;top:263px;text-decoration:line-through;text-decoration-color:#222"><i class="pn">width</i><i class="x">: 100%;</i></div>
<div class="c" style="left:944px;top:277px;text-decoration:line-through;text-decoration-color:#222"><i class="pn">height</i><i class="x">: 100%;</i></div>
<div class="c" style="left:944px;top:291px"><i class="pn">position</i><i class="x">: absolute;</i></div>
<div class="c" style="left:926px;top:305.5px"><i class="x">}</i></div>
<div style="left:922px;top:324px;width:138px;height:1px;background:#e3e3e3"></div>
<div class="c" style="left:926px;top:326px"><i class="g" style="text-decoration:underline">www-player-webp…fl3ns</i></div>
<div class="c" style="left:926px;top:340.5px"><i class="x">.html5-main-video {</i></div>
<div class="c" style="left:944px;top:356px;text-decoration:line-through;text-decoration-color:#222"><i class="pn">position</i><i class="x">: absolute;</i></div>
<div class="c" style="left:944px;top:370.5px;text-decoration:line-through;text-decoration-color:#222"><i class="pn">top</i><i class="x">: 0;</i></div>
<div class="c" style="left:944px;top:384px;text-decoration:line-through;text-decoration-color:#222"><i class="pn">left</i><i class="x">: 0;</i></div>
<div class="c" style="left:944px;top:397.5px;text-decoration:line-through;text-decoration-color:#222"><i class="pn">width</i><i class="x">: 100%;</i></div>
<div class="c" style="left:944px;top:411.5px;text-decoration:line-through;text-decoration-color:#222"><i class="pn">height</i><i class="x">: 100%;</i></div>
<div class="c" style="left:944px;top:423.5px"><i class="pn" style="text-decoration:line-through">outline</i><i class="x" style="text-decoration:line-through">:</i><i style="font-size:8px;color:#555">▶</i><i class="x" style="text-decoration:line-through"> 0;</i></div>
<div style="left:922px;top:432px;width:138px;height:18px;background:#f1f1f1"></div>
<svg style="left:927px;top:438px" width="6" height="9"><path d="M5.500 0.500 L0.500 4.500 L5.500 8.500Z" fill="#8a8a8a"/></svg>
<div style="left:939px;top:435px;width:105px;height:13px;background:#c1c1c1"></div>
<div style="left:0;top:431px;width:920px;height:21px;background:#fff;border-top:1px solid #cfcfcf"></div>
<div style="left:688px;top:432px;width:211.500px;height:18px;background:#3879d9"></div>
<div class="t bc" style="letter-spacing:-0.005px;left:2px;top:435.500px;color:#222;font-weight:bold">...</div>
<div class="t bc" style="letter-spacing:0.219px;left:27px;top:435.500px;color:#333">div</div>
<div class="t bc" style="letter-spacing:0.219px;left:57px;top:435.500px;color:#333">div</div>
<div class="t bc" style="letter-spacing:0.219px;left:87px;top:435.500px;color:#333">div</div>
<div class="t bc" style="letter-spacing:0.219px;left:117px;top:435.500px;color:#333">div</div>
<div class="t bc" style="letter-spacing:0.219px;left:147px;top:435.500px;color:#333">div</div>
<div class="t bc" style="letter-spacing:0.103px;left:176px;top:435.500px;color:#333">#drive-viewer-video-player-object-2</div>
<div class="t bc" style="letter-spacing:-0.168px;left:382px;top:435.500px;color:#333">html</div>
<div class="t bc" style="letter-spacing:0.242px;left:420px;top:435.500px;color:#333">body</div>
<div class="t bc" style="letter-spacing:-0.051px;left:461px;top:435.500px;color:#333">#player</div>
<div class="t bc" style="letter-spacing:-0.267px;left:513px;top:435.500px;color:#333">#player_uid_656675963_1</div>
<div class="t bc" style="letter-spacing:0.219px;left:664px;top:435.500px;color:#333">div</div>
<div class="t bc" style="letter-spacing:0.064px;left:694px;top:435.500px;color:#fff">video.video-stream.html5-main-video</div>
<div style="left:0;top:450px;width:1060px;height:1px;background:#1c82d8"></div>
<div style="left:0;top:451px;width:107px;height:1px;background:#d8d4cc"></div>
<div style="left:107px;top:451px;width:953px;height:1px;background:#222"></div>
<!--DTEND-->
</div>
<svg class="abs" style="left:0;top:0;position:absolute;pointer-events:none" width="1060" height="903" viewBox="0 0 1060 903">
 <path d="M856.500 769 C846 752 836 741 822 731 C806 720 790 715 770 710.500 C752 707 732 705.500 716 703.500 L699 699.500" fill="none" stroke="#9a0c0c" stroke-width="4.200" stroke-linecap="round"/>
 <path d="M751 692 C735 694 715 696 698.500 699 C706 706 716 712 724 718.500 C728 722 730 726 730.500 730" fill="none" stroke="#9a0c0c" stroke-width="3.800" stroke-linecap="round" stroke-linejoin="round"/>
</svg>
</body></html>
